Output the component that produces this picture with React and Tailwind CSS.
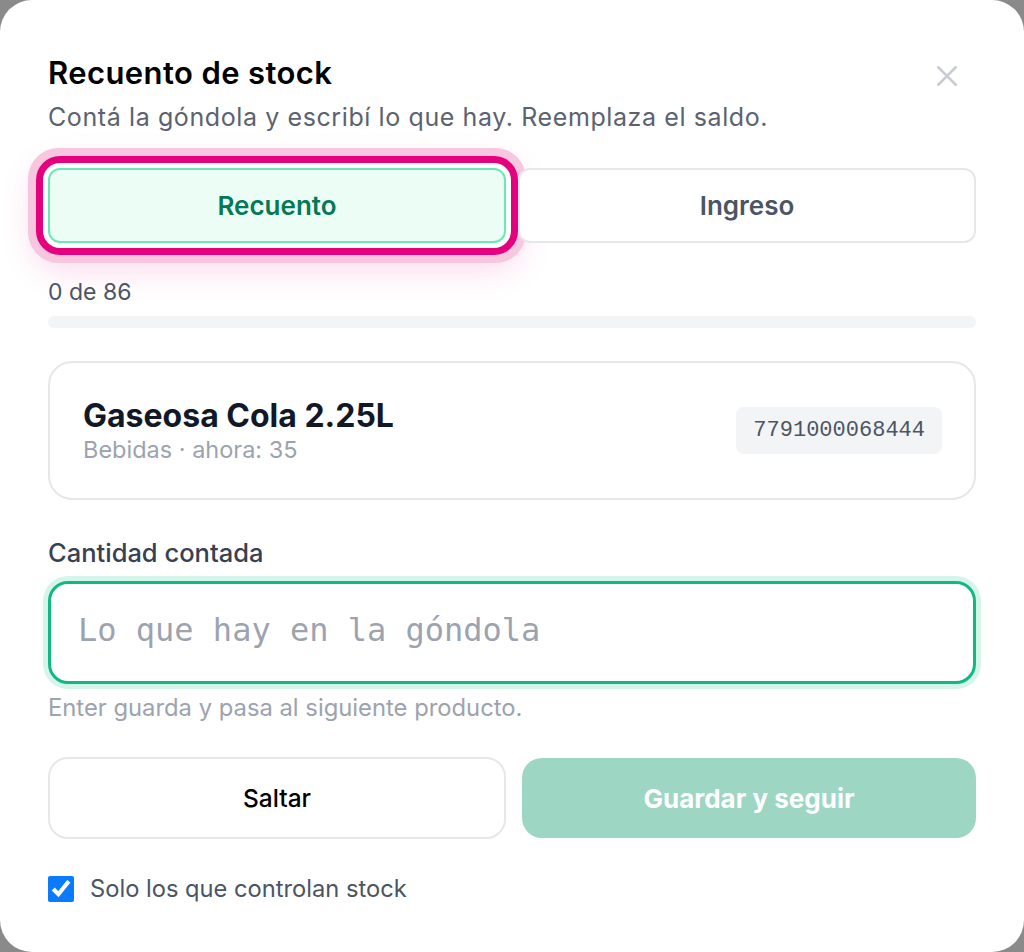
import { useState } from 'react';

export default function App() {
    const [mode, setMode] = useState('recuento');
    const [qty, setQty] = useState('');
    const [onlyTracked, setOnlyTracked] = useState(true);

    const tabBase = 'h-[75px] rounded-[12px] border-2 text-[26px] font-semibold';
    const tabActive = 'border-[#6ee7b7] bg-[#ecfdf5] text-[#047857] shadow-[0_0_0_5px_#ffffff,0_0_0_12px_#e5007d,0_0_0_20px_#f8c6df,0_12px_34px_14px_rgba(229,0,125,0.16)]';
    const tabIdle = 'border-[#e5e7eb] bg-white text-[#4b5563]';

    return (
        <div className="min-h-[952px] w-full bg-[#8a8a8a] font-['Inter',sans-serif]">
            <div className="min-h-[952px] w-full rounded-[32px] bg-white px-12 pt-[52px] pb-10">
                <div className="flex items-start justify-between">
                    <div>
                        <h1 className="text-[31px] leading-[42px] font-semibold tracking-[0.4px] text-black">Recuento de stock</h1>
                        <p className="mt-[8px] text-[25px] leading-[30px] tracking-[0.6px] text-[#5b6270]">
                            Contá la góndola y escribí lo que hay. Reemplaza el saldo.
                        </p>
                    </div>
                    <button className="mt-[9px] mr-[14px] text-[#c9ccd3]" aria-label="Cerrar">
                        <svg width="30" height="30" viewBox="0 0 24 24" fill="none" stroke="currentColor" strokeWidth="2" strokeLinecap="round">
                            <path d="M5 5l14 14M19 5L5 19" />
                        </svg>
                    </button>
                </div>

                {/* Tabs */}
                <div className="mt-[36px] grid grid-cols-2 gap-3">
                    <button onClick={() => setMode('recuento')} className={`${tabBase} ${mode === 'recuento' ? tabActive : tabIdle}`}>
                        Recuento
                    </button>
                    <button onClick={() => setMode('ingreso')} className={`${tabBase} ${mode === 'ingreso' ? tabActive : tabIdle}`}>
                        Ingreso
                    </button>
                </div>

                {/* Progress */}
                <div className="mt-[35px] text-[23px] leading-[28px] text-[#4b5563]">0 de 86</div>
                <div className="mt-[10px] h-[12px] w-full rounded-full bg-[#f3f4f6]">
                    <div className="h-full rounded-full bg-[#10b981]" style={{ width: '0%' }} />
                </div>

                {/* Product */}
                <div className="mt-[33px] flex h-[139px] items-center justify-between rounded-[24px] border-2 border-[#e5e7eb] pl-[33px] pr-[32px]">
                    <div>
                        <div className="text-[32px] leading-[38px] font-bold text-[#111827]">Gaseosa Cola 2.25L</div>
                        <div className="text-[23.5px] leading-[30px] text-[#9ca3af]">Bebidas · ahora: 35</div>
                    </div>
                    <span className="rounded-[8px] bg-[#f3f4f6] px-[17px] py-[10px] font-['Liberation_Mono',monospace] text-[22px] leading-[27px] text-[#4b5563]">
                        7791000068444
                    </span>
                </div>

                {/* Quantity */}
                <label className="mt-[37px] block text-[25.5px] leading-[32px] font-medium text-[#374151]">Cantidad contada</label>
                <input
                    type="text"
                    value={qty}
                    onChange={(e) => setQty(e.target.value)}
                    placeholder="Lo que hay en la góndola"
                    className="mt-[12px] h-[103px] w-full rounded-[20px] border-[3px] border-[#10b981] px-[27px] pb-[5px] font-['DejaVu_Sans_Mono',monospace] text-[32px] text-[#111827] placeholder-[#9ca3af] outline-none shadow-[0_0_0_5px_#d5f5e8]"
                />
                <p className="mt-[10px] text-[23.8px] leading-[28px] text-[#9ca3af]">Enter guarda y pasa al siguiente producto.</p>

                {/* Actions */}
                <div className="mt-[35px] flex items-center gap-4">
                    <button className="h-[82px] w-[458px] rounded-[20px] border-2 border-[#e5e7eb] bg-white text-[24.5px] font-medium text-black">
                        Saltar
                    </button>
                    <button disabled className="h-[80px] flex-1 rounded-[20px] bg-[#9dd6c3] text-[26px] font-bold text-white">
                        Guardar y seguir
                    </button>
                </div>

                <label className="mt-[32px] flex items-center gap-4 text-[23.7px] text-[#4b5563]">
                    <input
                        type="checkbox"
                        checked={onlyTracked}
                        onChange={(e) => setOnlyTracked(e.target.checked)}
                        className="h-[26px] w-[26px] accent-[#0a7aff]"
                    />
                    Solo los que controlan stock
                </label>
            </div>
        </div>
    );
}
